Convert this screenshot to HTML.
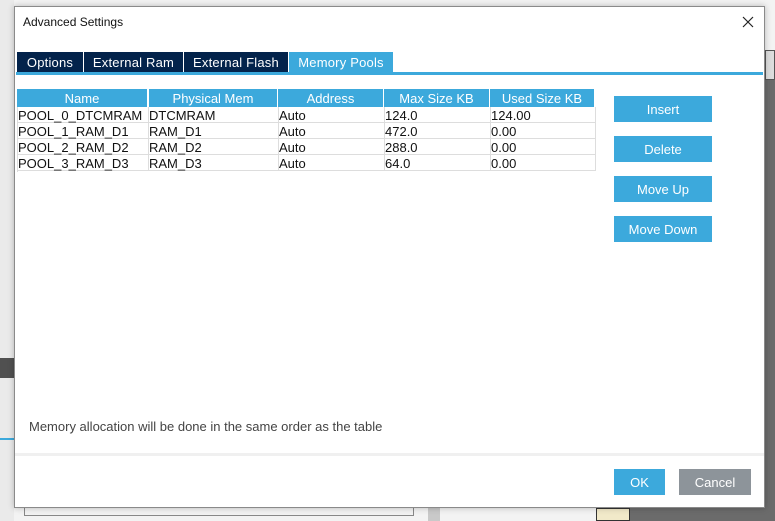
<!DOCTYPE html>
<html><head><meta charset="utf-8"><style>
*{box-sizing:border-box;margin:0;padding:0}
body{width:775px;height:521px;overflow:hidden;background:#f3f3f3;position:relative;font-family:"Liberation Sans",Arial,sans-serif;font-size:12px;color:#222}
.abs{position:absolute}
.dlg{left:14px;top:6px;width:751px;height:502px;background:#fff;border:1px solid #8a8a8a;box-shadow:0 0 6px rgba(0,0,0,.25)}
.tab{position:absolute;top:45px;height:21px;background:#03234b;color:#fff;font-size:13px;text-align:center;line-height:21px;letter-spacing:.2px}
.th{position:absolute;top:82px;height:18px;background:#3ca9dc;color:#fff;font-size:13px;text-align:center;line-height:19px}
.td{position:absolute;height:16px;border-right:1px solid #ddd;border-bottom:1px solid #ddd;font-size:13px;line-height:17px;padding-left:0;color:#111}
.btn{position:absolute;background:#3ca9dc;color:#fff;font-size:13px;text-align:center;line-height:27px;height:26px}
</style></head><body>
<div class="abs" style="left:0;top:0;width:14px;height:521px;background:#eaeaea"></div>
<div class="abs" style="left:0;top:358px;width:14px;height:20px;background:#505050"></div>
<div class="abs" style="left:0;top:438px;width:14px;height:2px;background:#3ca9dc"></div>
<div class="abs" style="left:765px;top:50px;width:10px;height:30px;background:#ddd;border:1px solid #555"></div>
<div class="abs" style="left:765px;top:80px;width:10px;height:441px;background:#6b6b6b"></div>
<div class="abs" style="left:428px;top:508px;width:12px;height:13px;background:#c9c9c9"></div>
<div class="abs" style="left:596px;top:508px;width:34px;height:13px;background:#f1e9c9;border:1px solid #333"></div>
<div class="abs" style="left:630px;top:508px;width:135px;height:13px;background:#6b6b6b"></div>
<div class="abs" style="left:24px;top:508px;width:390px;height:8px;border:1px solid #888;border-top:none"></div>
<div class="abs dlg">
 <div class="abs" style="left:8px;top:8px;font-size:12px;color:#111">Advanced Settings</div>
 <svg class="abs" style="left:727px;top:9px" width="12" height="12" viewBox="0 0 12 12"><path d="M1 1L11 11M11 1L1 11" stroke="#222" stroke-width="1.2"/></svg>
 <div class="tab" style="left:2px;width:66px">Options</div>
 <div class="tab" style="left:69px;width:99px">External Ram</div>
 <div class="tab" style="left:169px;width:104px">External Flash</div>
 <div class="tab" style="left:274px;width:104px;background:#3ca9dc">Memory Pools</div>
 <div class="abs" style="left:1px;top:65px;width:747px;height:3px;background:#3ca9dc"></div>
 <div class="th" style="left:2px;width:130px">Name</div>
 <div class="th" style="left:134px;width:128px">Physical Mem</div>
 <div class="th" style="left:263px;width:105px">Address</div>
 <div class="th" style="left:369px;width:105px">Max Size KB</div>
 <div class="th" style="left:475px;width:104px">Used Size KB</div>
 <div class="abs" style="left:2px;top:100px;width:578px;height:65px;border-left:1px solid #ddd">
  <div class="td" style="left:0;top:0;width:131px">POOL_0_DTCMRAM</div><div class="td" style="left:131px;top:0;width:130px">DTCMRAM</div><div class="td" style="left:261px;top:0;width:106px">Auto</div><div class="td" style="left:367px;top:0;width:106px">124.0</div><div class="td" style="left:473px;top:0;width:105px">124.00</div>
  <div class="td" style="left:0;top:16px;width:131px">POOL_1_RAM_D1</div><div class="td" style="left:131px;top:16px;width:130px">RAM_D1</div><div class="td" style="left:261px;top:16px;width:106px">Auto</div><div class="td" style="left:367px;top:16px;width:106px">472.0</div><div class="td" style="left:473px;top:16px;width:105px">0.00</div>
  <div class="td" style="left:0;top:32px;width:131px">POOL_2_RAM_D2</div><div class="td" style="left:131px;top:32px;width:130px">RAM_D2</div><div class="td" style="left:261px;top:32px;width:106px">Auto</div><div class="td" style="left:367px;top:32px;width:106px">288.0</div><div class="td" style="left:473px;top:32px;width:105px">0.00</div>
  <div class="td" style="left:0;top:48px;width:131px">POOL_3_RAM_D3</div><div class="td" style="left:131px;top:48px;width:130px">RAM_D3</div><div class="td" style="left:261px;top:48px;width:106px">Auto</div><div class="td" style="left:367px;top:48px;width:106px">64.0</div><div class="td" style="left:473px;top:48px;width:105px">0.00</div>
 </div>
 <div class="btn" style="left:599px;top:89px;width:98px">Insert</div>
 <div class="btn" style="left:599px;top:129px;width:98px">Delete</div>
 <div class="btn" style="left:599px;top:169px;width:98px">Move Up</div>
 <div class="btn" style="left:599px;top:209px;width:98px">Move Down</div>
 <div class="abs" style="left:14px;top:412px;font-size:13px;color:#444">Memory allocation will be done in the same order as the table</div>
 <div class="abs" style="left:0;top:446px;width:749px;height:3px;background:#f0f0f0"></div>
 <div class="btn" style="left:599px;top:462px;width:51px">OK</div>
 <div class="btn" style="left:664px;top:462px;width:72px;background:#8d949a">Cancel</div>
</div>
</body></html>
